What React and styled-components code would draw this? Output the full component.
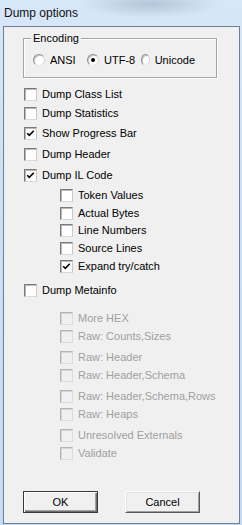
import React from "react";
import styled, { createGlobalStyle } from "styled-components";

const GlobalStyle = createGlobalStyle`
  html, body {
    margin: 0;
    padding: 0;
    background: #cfe1f4;
  }
  body {
    font-family: "Liberation Sans", Arial, sans-serif;
  }
`;

const Window = styled.div`
  width: 242px;
  height: 525px;
  box-sizing: border-box;
  display: flex;
  flex-direction: column;
  padding: 0 2px 1px 3px;
  background:
    radial-gradient(ellipse 70px 14px at 150px 4px, rgba(150, 170, 190, 0.55), rgba(150, 170, 190, 0) 100%),
    linear-gradient(180deg, #d7e7f8 0%, #cbe0f5 40%, #c4dbf3 100%);
`;

const TitleBar = styled.div`
  height: 26px;
  display: flex;
  align-items: center;
  padding-left: 1px;
  font-size: 12px;
  color: #111;
`;

const Client = styled.div`
  flex: 1;
  display: flex;
  flex-direction: column;
  background: #f0f0f0;
  border: 1px solid #6a7f96;
  padding: 0 0 10px 19px;
  font-size: 11px;
  color: #000;
`;

const GroupBox = styled.div`
  position: relative;
  box-sizing: border-box;
  width: 194px;
  height: 40px;
  margin-top: 11px;
  padding: 14px 0 0 9px;
  border: 1px solid #a5a5a5;
  box-shadow: inset 1px 1px 0 #fff, 1px 1px 0 #fff;
  display: flex;
`;

const Legend = styled.span`
  position: absolute;
  left: 7px;
  top: -8px;
  padding: 0 2px;
  line-height: 14px;
  background: #f0f0f0;
`;

const RadioItem = styled.label`
  width: 54px;
  height: 14px;
  display: flex;
  align-items: center;
  gap: 5px;
  white-space: nowrap;
`;

const RadioCircle = styled.span`
  width: 12px;
  height: 12px;
  box-sizing: border-box;
  border-radius: 50%;
  border: 1px solid;
  border-color: #8c8c8c #d4d4d4 #e6e6e6 #8c8c8c;
  background: #fff;
  box-shadow: inset 1px 1px 0 #c8c8c8;
  display: flex;
  align-items: center;
  justify-content: center;
  &::after {
    content: "";
    width: 4px;
    height: 4px;
    border-radius: 50%;
    background: ${(p) => (p.$on ? "#000" : "transparent")};
  }
`;

const OptionList = styled.div`
  display: flex;
  flex-direction: column;
  margin-left: 1px;
`;

const OptionRow = styled.label`
  height: 14px;
  display: flex;
  align-items: center;
  gap: 5px;
  margin-top: ${(p) => p.$gap}px;
  margin-left: ${(p) => p.$indent}px;
  color: ${(p) => (p.$disabled ? "#a0a0a0" : "#000")};
  white-space: nowrap;
`;

const Box = styled.span`
  width: 13px;
  height: 13px;
  box-sizing: border-box;
  flex: none;
  border: 1px solid;
  border-color: ${(p) =>
    p.$disabled ? "#b4b4b4 #dcdcdc #dcdcdc #b4b4b4" : "#7a7a7a #c9c9c9 #d9d9d9 #7a7a7a"};
  background: ${(p) => (p.$disabled ? "#f0f0f0" : "#fff")};
  box-shadow: ${(p) => (p.$disabled ? "inset 1px 1px 0 #d6d6d6" : "inset 1px 1px 0 #b8b8b8")};
  display: flex;
  align-items: center;
  justify-content: center;
`;

const ButtonRow = styled.div`
  margin-top: auto;
  display: flex;
  gap: 27px;
`;

const Button = styled.button`
  width: 75px;
  height: 22px;
  box-sizing: border-box;
  padding: 0;
  font-family: inherit;
  font-size: 11px;
  color: #000;
  background: #f0f0f0;
  border: 1px solid;
  border-color: ${(p) => (p.$default ? "#3a3a3a" : "#fff #5a5a5a #5a5a5a #fff")};
  box-shadow: ${(p) =>
    p.$default
      ? "inset 1px 1px 0 #fff, inset -1px -1px 0 #6e6e6e, inset -2px -2px 0 #a0a0a0"
      : "inset 1px 1px 0 #e3e3e3, inset -1px -1px 0 #a0a0a0"};
`;

const Check = () => (
  <svg width="9" height="9" viewBox="0 0 9 9">
    <path d="M1.2 4.2 L3.3 6.4 L7.8 1.8" fill="none" stroke="#000" strokeWidth="1.6" />
  </svg>
);

const options = [
  { label: "Dump Class List", y: 94, indent: 0 },
  { label: "Dump Statistics", y: 113, indent: 0 },
  { label: "Show Progress Bar", y: 133, indent: 0, on: true },
  { label: "Dump Header", y: 154, indent: 0 },
  { label: "Dump IL Code", y: 175, indent: 0, on: true },
  { label: "Token Values", y: 195, indent: 36 },
  { label: "Actual Bytes", y: 213, indent: 36 },
  { label: "Line Numbers", y: 230, indent: 36 },
  { label: "Source Lines", y: 248, indent: 36 },
  { label: "Expand try/catch", y: 266, indent: 36, on: true },
  { label: "Dump Metainfo", y: 290, indent: 0 },
  { label: "More HEX", y: 318, indent: 36, off: true },
  { label: "Raw: Counts,Sizes", y: 336, indent: 36, off: true },
  { label: "Raw: Header", y: 357, indent: 36, off: true },
  { label: "Raw: Header,Schema", y: 375, indent: 36, off: true },
  { label: "Raw: Header,Schema,Rows", y: 396, indent: 36, off: true },
  { label: "Raw: Heaps", y: 414, indent: 36, off: true },
  { label: "Unresolved Externals", y: 435, indent: 36, off: true },
  { label: "Validate", y: 453, indent: 36, off: true },
];

// group box ends at y=78, each row is 14px tall around its centre y
const rows = options.map((o, i) => {
  const prevEnd = i === 0 ? 78 : options[i - 1].y + 7;
  return { ...o, gap: o.y - 7 - prevEnd };
});

export default function App() {
  return (
    <>
      <GlobalStyle />
      <Window>
        <TitleBar>Dump options</TitleBar>
        <Client>
          <GroupBox>
            <Legend>Encoding</Legend>
            <RadioItem>
              <RadioCircle />
              ANSI
            </RadioItem>
            <RadioItem>
              <RadioCircle $on />
              UTF-8
            </RadioItem>
            <RadioItem>
              <RadioCircle />
              Unicode
            </RadioItem>
          </GroupBox>
          <OptionList>
            {rows.map((r) => (
              <OptionRow key={r.label} $gap={r.gap} $indent={r.indent} $disabled={r.off}>
                <Box $disabled={r.off}>{r.on && <Check />}</Box>
                {r.label}
              </OptionRow>
            ))}
          </OptionList>
          <ButtonRow>
            <Button $default>OK</Button>
            <Button>Cancel</Button>
          </ButtonRow>
        </Client>
      </Window>
    </>
  );
}
